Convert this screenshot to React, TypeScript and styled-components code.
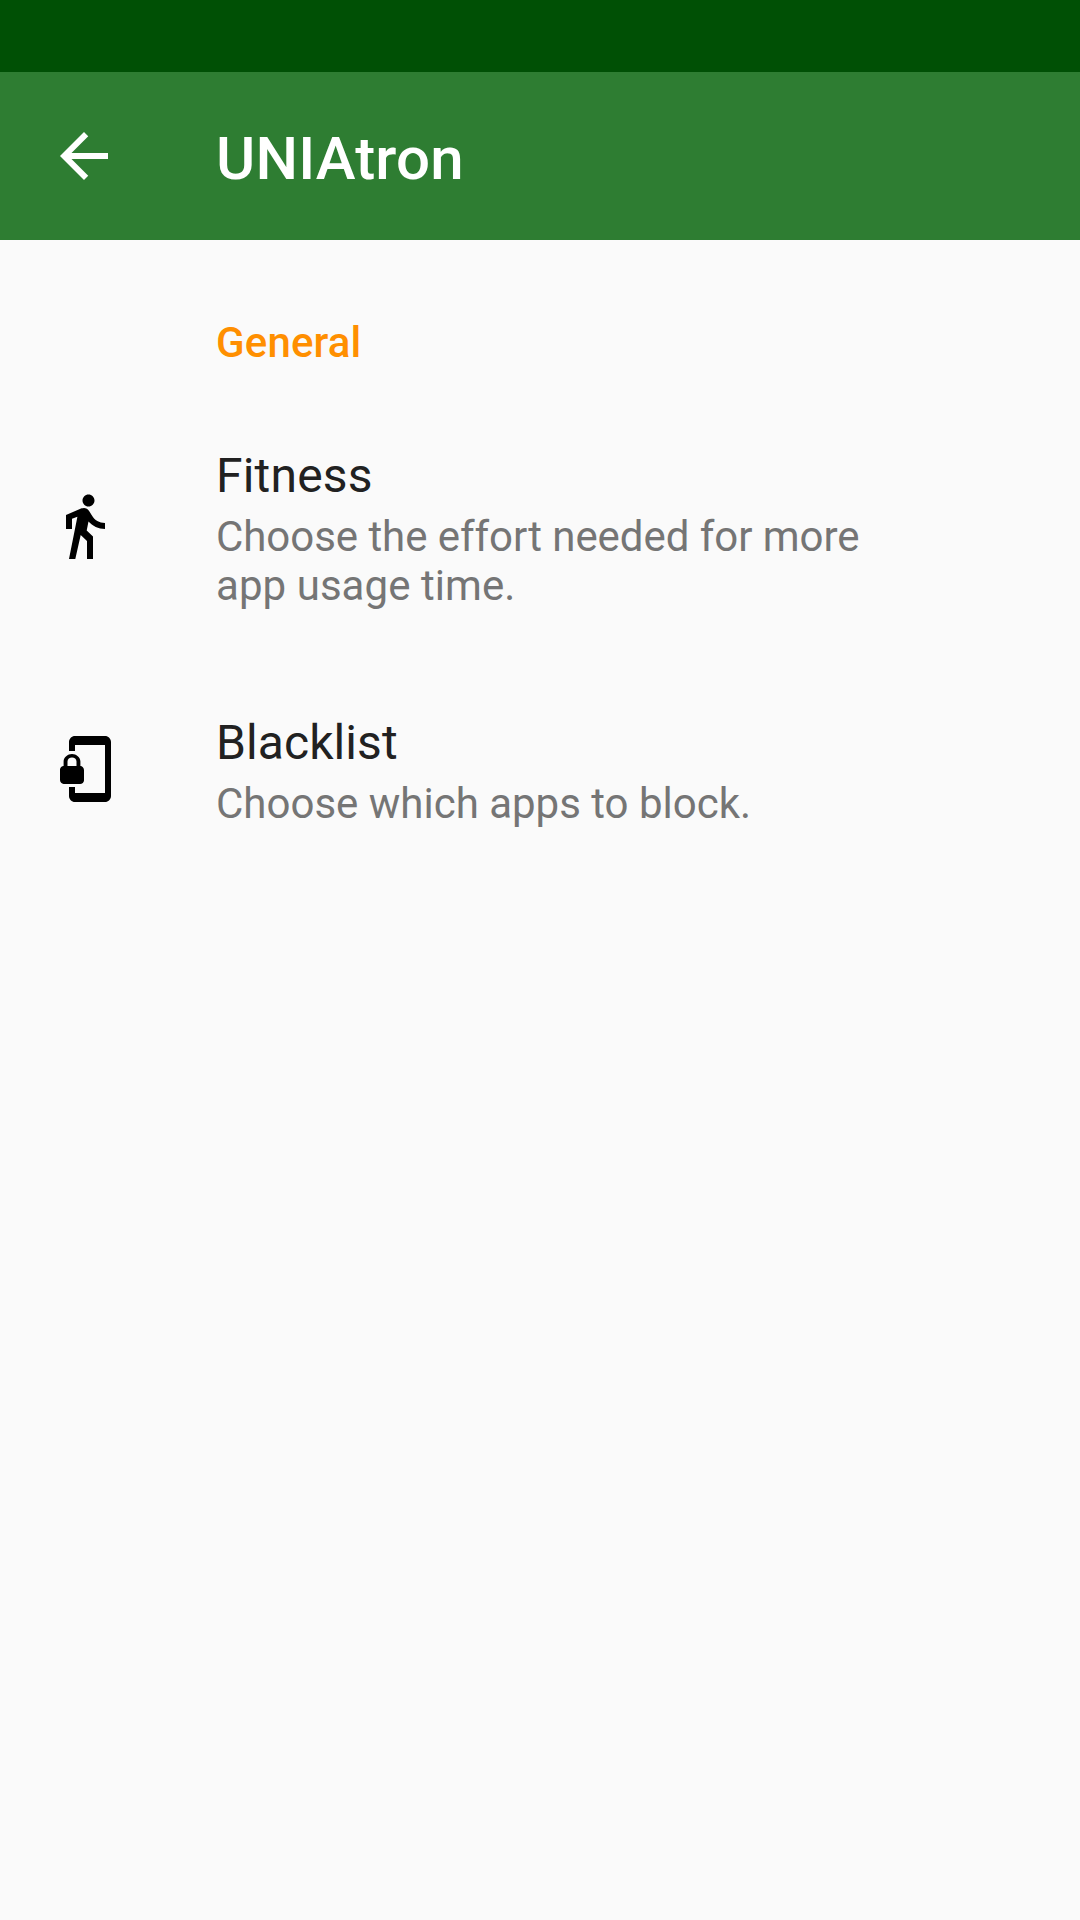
import React from "react";
import styled, { createGlobalStyle } from "styled-components";

const Global = createGlobalStyle`
  body { margin: 0; background: #fafafa; font-family: Roboto, "Noto Sans", sans-serif; }
`;
const Screen = styled.main`
  width: 1080px;
  height: 1920px;
  background: #fafafa;
  overflow: hidden;
`;
const StatusBar = styled.div`
  height: 72px;
  background: #005005;
`;
const AppBar = styled.header`
  display: flex;
  align-items: center;
  height: 168px;
  background: #2e7d32;
`;
const BackButton = styled.button`
  display: flex;
  width: 216px;
  padding: 0 0 0 48px;
  border: 0;
  background: none;
  box-sizing: border-box;
  color: #fff;
`;
const Title = styled.h1`
  margin: 6px 0 0;
  font-size: 60px;
  line-height: 70px;
  font-weight: 500;
  letter-spacing: 0.15px;
  color: #fff;
`;
const Category = styled.h2`
  margin: 0;
  padding: 78px 0 0 216px;
  height: 156px;
  box-sizing: border-box;
  font-size: 42px;
  line-height: 49px;
  font-weight: 500;
  letter-spacing: 0.15px;
  color: #ff8f00;
`;
const Row = styled.section<{ $height: number }>`
  display: flex;
  align-items: center;
  height: ${(p) => p.$height}px;
`;
const IconSlot = styled.div`
  display: flex;
  width: 168px;
  padding-left: 48px;
`;
const Copy = styled.div<{ $top: number }>`
  align-self: flex-start;
  padding-top: ${(p) => p.$top}px;
`;
const Name = styled.div<{ $tracking?: number }>`
  margin-bottom: 8px;
  font-size: 48px;
  line-height: 56px;
  letter-spacing: ${(p) => p.$tracking ?? 0}px;
  color: #212121;
`;
const Summary = styled.div`
  font-size: 42px;
  line-height: 49px;
  color: #757575;
`;
const Line = styled.span<{ $tracking?: number }>`
  display: block;
  letter-spacing: ${(p) => p.$tracking ?? 0}px;
`;

const Icon = ({ d }: { d: string }) => (
  <svg width="72" height="72" viewBox="0 0 24 24" fill="currentColor">
    <path d={d} />
  </svg>
);

const BACK = "M20 11H7.83l5.59-5.59L12 4l-8 8 8 8 1.41-1.41L7.83 13H20v-2z";
const WALK =
  "M13.5 5.5c1.1 0 2-.9 2-2s-.9-2-2-2-2 .9-2 2 .9 2 2 2zM9.8 8.9L7 23h2.1l1.8-8 2.1 2v6h2v-7.5l-2.1-2 .6-3C14.8 12 16.8 13 19 13v-2c-1.9 0-3.5-1-4.3-2.4l-1-1.6c-.4-.6-1-1-1.7-1-.3 0-.5.1-.8.1L6 8.3V13h2V9.6l1.8-.7";
const LOCK =
  "M19 1H9c-1.1 0-2 .9-2 2v3h2V4h10v16H9v-2H7v3c0 1.1.9 2 2 2h10c1.1 0 2-.9 2-2V3c0-1.1-.9-2-2-2zm-8.2 10V9.5C10.8 8.1 9.4 7 8 7S5.2 8.1 5.2 9.5V11c-.6 0-1.2.6-1.2 1.2v3.5c0 .7.6 1.3 1.2 1.3h5.5c.7 0 1.3-.6 1.3-1.2v-3.5c0-.7-.6-1.3-1.2-1.3zm-1.3 0h-3V9.5c0-.8.7-1.3 1.5-1.3s1.5.5 1.5 1.3V11z";

export default function App() {
  return (
    <Screen>
      <Global />
      <StatusBar />
      <AppBar>
        <BackButton aria-label="Back">
          <Icon d={BACK} />
        </BackButton>
        <Title>UNIAtron</Title>
      </AppBar>
      <Category>General</Category>
      <Row $height={260}>
        <IconSlot><Icon d={WALK} /></IconSlot>
        <Copy $top={52}>
          <Name $tracking={0.18}>Fitness</Name>
          <Summary>
            <Line $tracking={-0.05}>Choose the effort needed for more </Line>
            <Line $tracking={0.06}>app usage time.</Line>
          </Summary>
        </Copy>
      </Row>
      <Row $height={226}>
        <IconSlot><Icon d={LOCK} /></IconSlot>
        <Copy $top={59}>
          <Name $tracking={0.08}>Blacklist</Name>
          <Summary>
            <Line>Choose which apps to block.</Line>
          </Summary>
        </Copy>
      </Row>
    </Screen>
  );
}
